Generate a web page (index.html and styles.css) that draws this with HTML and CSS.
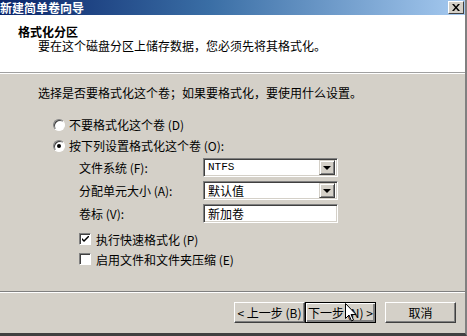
FILE: index.html
```html
<!DOCTYPE html>
<html lang="zh-CN">
  <head>
    <meta charset="UTF-8" />
    <title>新建简单卷向导</title>
    <link rel="stylesheet" href="styles.css">
  </head>
  <body>
    <div class="window">
      <div class="titlebar">
        <span class="title">新建简单卷向导</span>
        <span class="close">
          <svg width="8" height="7" viewBox="0 0 8 7"><path d="M0 0h2l2 2.5L6 0h2L5 3.5 8 7H6L4 4.5 2 7H0l3-3.5z" fill="#000"/></svg>
        </span>
      </div>

      <div class="header">
        <h1>格式化分区</h1>
        <p>要在这个磁盘分区上储存数据，您必须先将其格式化。</p>
      </div>

      <div class="content">
        <p class="intro">选择是否要格式化这个卷；如果要格式化，要使用什么设置。</p>

        <div class="options">
          <div class="radio-row"><span class="radio"></span>不要格式化这个卷 (D)</div>
          <div class="radio-row"><span class="radio checked"></span>按下列设置格式化这个卷 (O):</div>

          <div class="fields">
            <div class="field">
              <span class="field-label">文件系统 (F):</span>
              <div class="box select"><span class="value mono">NTFS</span><span class="drop"></span></div>
            </div>
            <div class="field">
              <span class="field-label">分配单元大小 (A):</span>
              <div class="box select"><span class="value">默认值</span><span class="drop"></span></div>
            </div>
            <div class="field">
              <span class="field-label">卷标 (V):</span>
              <div class="box"><span class="value">新加卷</span></div>
            </div>
          </div>

          <div class="checks">
            <div class="check-row">
              <span class="check">
                <svg width="7" height="7" viewBox="0 0 7 7"><path d="M0 2v2l2 2 5-5V-1L2 4z" fill="#000"/></svg>
              </span>
              执行快速格式化 (P)
            </div>
            <div class="check-row"><span class="check"></span>启用文件和文件夹压缩 (E)</div>
          </div>
        </div>
      </div>

      <div class="footer">
        <div class="buttons">
          <span class="btn">&lt; 上一步 (B)</span>
          <span class="btn default">下一步 (N) &gt;</span>
          <span class="btn cancel">取消</span>
        </div>
        <svg class="cursor" width="12" height="19" viewBox="0 0 12 19">
          <path d="M0.5 0.5v15l3.5-3.5 2.5 6 2-1-2.5-5.5h5z" fill="#fff" stroke="#000"/>
        </svg>
      </div>
    </div>
  </body>
</html>
```

FILE: styles.css
```css
* {
  margin: 0;
  padding: 0;
  box-sizing: border-box;
}

body {
  width: 467px;
  height: 336px;
  overflow: hidden;
  background-color: #d4d0c8;
  font-family: "Noto Sans CJK SC", "Liberation Sans", sans-serif;
  font-size: 12px;
  color: #000;
}

.window {
  width: 467px;
  height: 336px;
  display: flex;
  flex-direction: column;
  background-color: #d4d0c8;
  border-right: 2px solid #808080;
  border-bottom: 3px solid #404040;
  position: relative;
}

.titlebar {
  height: 15px;
  display: flex;
  justify-content: space-between;
  align-items: center;
  background: linear-gradient(to right, #0a246a 0%, #3a6ea5 45%, #a6caf0 100%);
  color: #fff;
  padding-right: 1px;
}

.title {
  font-weight: bold;
  font-size: 12px;
  line-height: 15px;
}

.close {
  width: 16px;
  height: 13px;
  display: flex;
  justify-content: center;
  align-items: center;
  background-color: #d4d0c8;
  border: 1px solid;
  border-color: #fff #404040 #404040 #fff;
}

.header {
  height: 58px;
  background-color: #fff;
  padding: 10px 0 0 18px;
  border-bottom: 1px solid #a0a0a0;
  box-shadow: 0 1px 0 #fff;
}

.header h1 {
  font-size: 12px;
  font-weight: bold;
  line-height: 14px;
}

.header p {
  line-height: 14px;
  padding-left: 20px;
}

.content {
  height: 219px;
  padding: 13px 0 0 38px;
  border-bottom: 1px solid #808080;
}

.intro {
  line-height: 14px;
}

.options {
  margin-top: 14px;
  padding-left: 15px;
}

.radio-row {
  height: 21px;
  display: flex;
  align-items: center;
  gap: 4px;
}

.radio {
  width: 12px;
  height: 12px;
  border-radius: 50%;
  background-color: #fff;
  border: 1px solid;
  border-color: #808080 #fff #fff #808080;
  box-shadow: inset 1px 1px 0 #404040;
  display: flex;
  justify-content: center;
  align-items: center;
}

.radio.checked::after {
  content: "";
  width: 4px;
  height: 4px;
  border-radius: 50%;
  background-color: #000;
}

.fields {
  margin-top: 2px;
  padding-left: 26px;
  display: flex;
  flex-direction: column;
  gap: 4px;
}

.field {
  display: flex;
  align-items: center;
  height: 19px;
}

.field-label {
  width: 124px;
}

.box {
  width: 135px;
  height: 19px;
  display: flex;
  align-items: center;
  background-color: #fff;
  border: 1px solid;
  border-color: #808080 #fff #fff #808080;
  box-shadow: inset 1px 1px 0 #404040, inset -1px -1px 0 #d4d0c8;
  padding: 2px;
}

.value {
  flex: 1;
  padding-left: 2px;
  line-height: 15px;
}

.mono {
  font-family: "Liberation Mono", monospace;
  font-size: 11px;
}

.drop {
  width: 16px;
  height: 15px;
  background-color: #d4d0c8;
  border: 1px solid;
  border-color: #d4d0c8 #404040 #404040 #d4d0c8;
  box-shadow: inset 1px 1px 0 #fff, inset -1px -1px 0 #808080;
  display: flex;
  justify-content: center;
  align-items: center;
}

.drop::after {
  content: "";
  border-left: 4px solid transparent;
  border-right: 4px solid transparent;
  border-top: 4px solid #000;
}

.checks {
  margin-top: 6px;
  padding-left: 26px;
}

.check-row {
  height: 20px;
  display: flex;
  align-items: center;
  gap: 5px;
}

.check {
  width: 12px;
  height: 12px;
  background-color: #fff;
  border: 1px solid;
  border-color: #808080 #fff #fff #808080;
  box-shadow: inset 1px 1px 0 #404040;
  display: flex;
  justify-content: center;
  align-items: center;
}

.footer {
  flex: 1;
  border-top: 1px solid #fff;
  padding-top: 9px;
  position: relative;
}

.buttons {
  display: flex;
  justify-content: flex-end;
  padding-right: 9px;
}

.btn {
  width: 71px;
  height: 21px;
  display: flex;
  justify-content: center;
  align-items: center;
  background-color: #d4d0c8;
  border: 1px solid;
  border-color: #fff #404040 #404040 #fff;
  box-shadow: inset -1px -1px 0 #808080;
}

.btn.default {
  border: 1px solid #000;
  box-shadow: inset 1px 1px 0 #fff, inset -2px -2px 0 #808080;
}

.btn.cancel {
  margin-left: 9px;
}

.cursor {
  position: absolute;
  left: 345px;
  top: 10px;
}
```
